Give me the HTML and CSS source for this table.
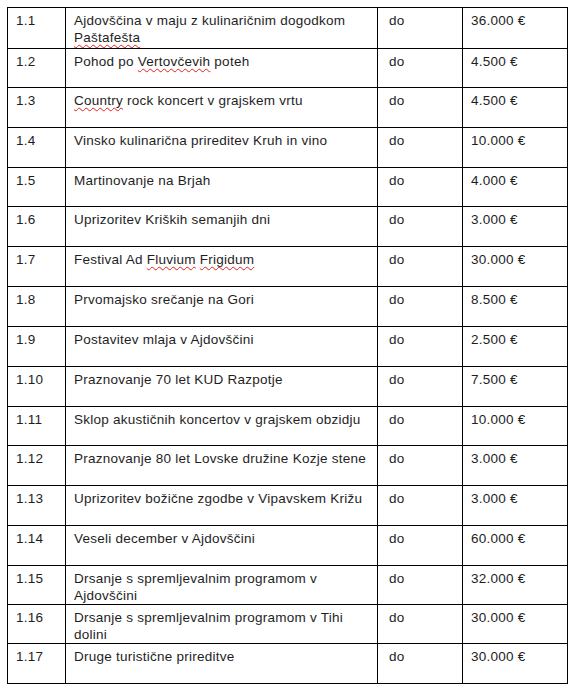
FILE: index.html
```html
<!DOCTYPE html>
<html lang="sl">
<head>
<meta charset="utf-8">
<link rel="stylesheet" href="styles.css">
</head>
<body>
<table class="tbl">
  <colgroup>
    <col class="c1"><col class="c2"><col class="c3"><col class="c4">
  </colgroup>
  <tr class="r41"><td>1.1</td><td>Ajdovščina v maju z kulinaričnim dogodkom<br><span class="sq">Paštafešta</span></td><td class="do">do</td><td>36.000 €</td></tr>
  <tr class="r39"><td>1.2</td><td>Pohod po <span class="sq">Vertovčevih</span> poteh</td><td class="do">do</td><td>4.500 €</td></tr>
  <tr class="r40"><td>1.3</td><td><span class="sq">Country</span> rock koncert v grajskem vrtu</td><td class="do">do</td><td>4.500 €</td></tr>
  <tr class="r40"><td>1.4</td><td>Vinsko kulinarična prireditev Kruh in vino</td><td class="do">do</td><td>10.000 €</td></tr>
  <tr class="r39"><td>1.5</td><td>Martinovanje na Brjah</td><td class="do">do</td><td>4.000 €</td></tr>
  <tr class="r40"><td>1.6</td><td>Uprizoritev Kriških semanjih dni</td><td class="do">do</td><td>3.000 €</td></tr>
  <tr class="r40"><td>1.7</td><td>Festival Ad <span class="sq">Fluvium</span> <span class="sq">Frigidum</span></td><td class="do">do</td><td>30.000 €</td></tr>
  <tr class="r40"><td>1.8</td><td>Prvomajsko srečanje na Gori</td><td class="do">do</td><td>8.500 €</td></tr>
  <tr class="r40"><td>1.9</td><td>Postavitev mlaja v Ajdovščini</td><td class="do">do</td><td>2.500 €</td></tr>
  <tr class="r40"><td>1.10</td><td>Praznovanje 70 let KUD Razpotje</td><td class="do">do</td><td>7.500 €</td></tr>
  <tr class="r39"><td>1.11</td><td>Sklop akustičnih koncertov v grajskem obzidju</td><td class="do">do</td><td>10.000 €</td></tr>
  <tr class="r40"><td>1.12</td><td>Praznovanje 80 let Lovske družine Kozje stene</td><td class="do">do</td><td>3.000 €</td></tr>
  <tr class="r40"><td>1.13</td><td>Uprizoritev božične zgodbe v Vipavskem Križu</td><td class="do">do</td><td>3.000 €</td></tr>
  <tr class="r40"><td>1.14</td><td>Veseli december v Ajdovščini</td><td class="do">do</td><td>60.000 €</td></tr>
  <tr class="r39"><td>1.15</td><td>Drsanje s spremljevalnim programom v<br>Ajdovščini</td><td class="do">do</td><td>32.000 €</td></tr>
  <tr class="r39"><td>1.16</td><td>Drsanje s spremljevalnim programom v Tihi<br>dolini</td><td class="do">do</td><td>30.000 €</td></tr>
  <tr class="r40"><td>1.17</td><td>Druge turistične prireditve</td><td class="do">do</td><td>30.000 €</td></tr>
</table>
</body>
</html>
```
FILE: styles.css
```css
html, body {
  margin: 0;
  padding: 0;
  background: #ffffff;
}
body {
  font-family: "Liberation Sans", Arial, sans-serif;
  font-size: 13.5px;
  letter-spacing: 0.25px;
  color: #1e1e1e;
  padding: 7px 0 0 7px;
}
.tbl {
  border-collapse: collapse;
  table-layout: fixed;
  width: 560px;
}
.c1 { width: 58px; }
.c2 { width: 312px; }
.c3 { width: 85px; }
.c4 { width: 105px; }
.tbl td {
  border: 1px solid #000;
  vertical-align: top;
  padding: 4px 6px 0 8px;
  line-height: 17px;
  white-space: nowrap;
  box-sizing: border-box;
}
.tbl td.do { padding-left: 11px; }
.r41 td { height: 41px; }
.r40 td { height: 40px; }
.r39 td { height: 39px; }
.sq {
  text-decoration: underline wavy #e02020;
  text-decoration-thickness: 1px;
  text-underline-offset: 2px;
  text-decoration-skip-ink: none;
}
```
